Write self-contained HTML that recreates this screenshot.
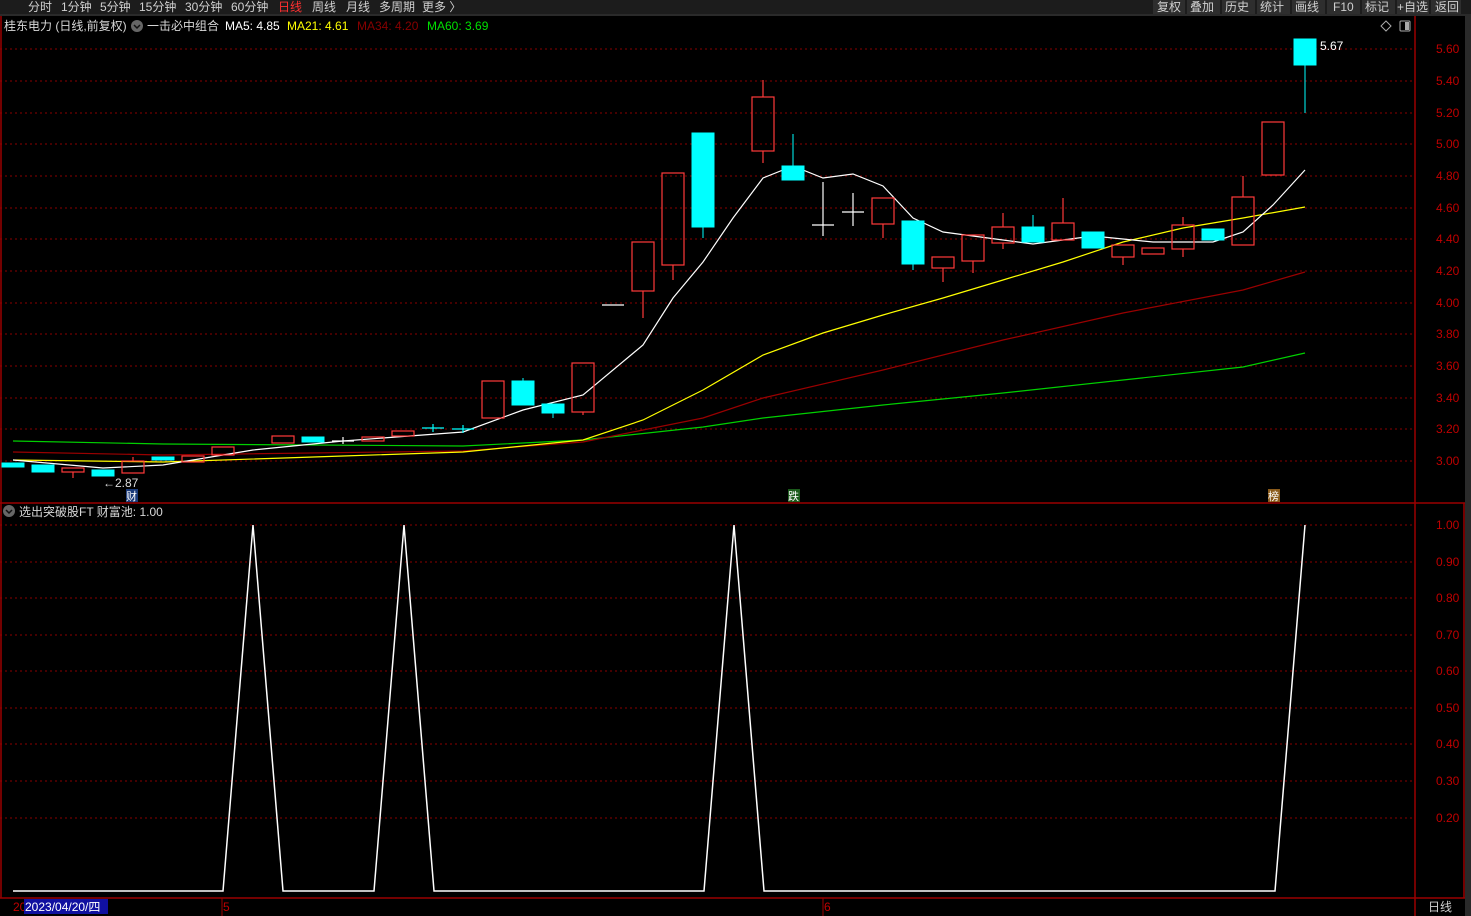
<!DOCTYPE html>
<html><head><meta charset="utf-8"><style>
body{margin:0;background:#000;width:1471px;height:916px;overflow:hidden;font-family:"Liberation Sans","Noto Sans CJK SC",sans-serif}
svg{position:absolute;left:0;top:0}
</style></head><body>
<svg width="1471" height="916" viewBox="0 0 1471 916" font-family="Liberation Sans, Noto Sans CJK SC, sans-serif">
<rect width="1471" height="916" fill="#000"/>
<rect x="0" y="0" width="1471" height="14" fill="#1c1c1c"/>
<rect x="0" y="14" width="1471" height="2" fill="#2a2a2a"/>
<g font-size="12" fill="#d0d0d0">
<text x="28" y="11">分时</text><text x="61" y="11">1分钟</text><text x="100" y="11">5分钟</text><text x="139" y="11">15分钟</text><text x="185" y="11">30分钟</text><text x="231" y="11">60分钟</text>
<text x="278" y="11" fill="#ff3030">日线</text><text x="312" y="11">周线</text><text x="346" y="11">月线</text><text x="379" y="11">多周期</text><text x="422" y="11">更多 〉</text>
</g>
<g fill="#2e2e2e"><rect x="1153" y="0" width="32" height="14"/><rect x="1187" y="0" width="33" height="14"/><rect x="1222" y="0" width="33" height="14"/><rect x="1257" y="0" width="33" height="14"/><rect x="1292" y="0" width="33" height="14"/><rect x="1327" y="0" width="33" height="14"/><rect x="1362" y="0" width="33" height="14"/><rect x="1397" y="0" width="32" height="14"/><rect x="1431" y="0" width="30" height="14"/></g>
<g font-size="12" fill="#d0d0d0"><text x="1157" y="11">复权</text><text x="1190" y="11">叠加</text><text x="1225" y="11">历史</text><text x="1260" y="11">统计</text><text x="1295" y="11">画线</text><text x="1333" y="11">F10</text><text x="1365" y="11">标记</text><text x="1397" y="11">+自选</text><text x="1435" y="11">返回</text></g>
<rect x="1465" y="16" width="6" height="900" fill="#2a2a2a"/>
<g font-size="12"><text x="4" y="30" fill="#d8d8d8">桂东电力 (日线,前复权)</text>
<circle cx="137" cy="26" r="6" fill="#666"/><path d="M134 25 l3 3 l3 -3" stroke="#111" stroke-width="1.5" fill="none"/>
<text x="147" y="30" fill="#d8d8d8">一击必中组合</text><text x="225" y="30" fill="#fff">MA5: 4.85</text><text x="287" y="30" fill="#ffff00">MA21: 4.61</text><text x="357" y="30" fill="#880000">MA34: 4.20</text><text x="427" y="30" fill="#00e000">MA60: 3.69</text></g>
<path d="M1386 21 l5 5 l-5 5 l-5 -5z" stroke="#aaa" fill="none"/><rect x="1400" y="21" width="10" height="10" rx="1" stroke="#aaa" fill="none"/><rect x="1405" y="22" width="4" height="8" fill="#aaa"/>
<g stroke="#8a0000" stroke-dasharray="2,3" stroke-width="1">
<line x1="0" y1="49" x2="1414" y2="49"/><line x1="0" y1="81" x2="1414" y2="81"/><line x1="0" y1="113" x2="1414" y2="113"/><line x1="0" y1="144" x2="1414" y2="144"/><line x1="0" y1="176" x2="1414" y2="176"/><line x1="0" y1="208" x2="1414" y2="208"/><line x1="0" y1="239" x2="1414" y2="239"/><line x1="0" y1="271" x2="1414" y2="271"/><line x1="0" y1="303" x2="1414" y2="303"/><line x1="0" y1="334" x2="1414" y2="334"/><line x1="0" y1="366" x2="1414" y2="366"/><line x1="0" y1="398" x2="1414" y2="398"/><line x1="0" y1="429" x2="1414" y2="429"/><line x1="0" y1="461" x2="1414" y2="461"/>
<line x1="0" y1="525" x2="1414" y2="525"/><line x1="0" y1="562" x2="1414" y2="562"/><line x1="0" y1="598" x2="1414" y2="598"/><line x1="0" y1="635" x2="1414" y2="635"/><line x1="0" y1="671" x2="1414" y2="671"/><line x1="0" y1="708" x2="1414" y2="708"/><line x1="0" y1="744" x2="1414" y2="744"/><line x1="0" y1="781" x2="1414" y2="781"/><line x1="0" y1="818" x2="1414" y2="818"/>
</g>
<g stroke="#9a0000" stroke-width="1.5" fill="none">
<line x1="1415" y1="16" x2="1415" y2="916"/><line x1="0" y1="503" x2="1465" y2="503"/><line x1="0" y1="898" x2="1465" y2="898"/><line x1="1464" y1="503" x2="1464" y2="898"/><line x1="1" y1="16" x2="1" y2="898"/>
</g>
<g fill="#c00000" font-size="12">
<text x="1436" y="53">5.60</text><text x="1436" y="85">5.40</text><text x="1436" y="117">5.20</text><text x="1436" y="148">5.00</text><text x="1436" y="180">4.80</text><text x="1436" y="212">4.60</text><text x="1436" y="243">4.40</text><text x="1436" y="275">4.20</text><text x="1436" y="307">4.00</text><text x="1436" y="338">3.80</text><text x="1436" y="370">3.60</text><text x="1436" y="402">3.40</text><text x="1436" y="433">3.20</text><text x="1436" y="465">3.00</text>
<text x="1436" y="529">1.00</text><text x="1436" y="566">0.90</text><text x="1436" y="602">0.80</text><text x="1436" y="639">0.70</text><text x="1436" y="675">0.60</text><text x="1436" y="712">0.50</text><text x="1436" y="748">0.40</text><text x="1436" y="785">0.30</text><text x="1436" y="822">0.20</text>
</g>
<g fill="none" stroke-width="1.2">
<polyline stroke="#00d000" points="13,441 163,444 463,446 583,440 703,427 763,418 883,405 1003,393 1123,380 1243,367 1305,353"/>
<polyline stroke="#990000" points="13,452 163,455 463,451 583,442 703,418 763,398 883,370 1003,340 1123,313 1243,290 1305,272"/>
<polyline stroke="#ffff00" points="13,460 163,462 343,456 463,452 583,440 643,420 703,390 763,355 823,333 883,315 943,298 1003,280 1063,262 1123,242 1183,228 1243,218 1305,207"/>
<polyline stroke="#ffffff" points="13,460 103,468 163,465 253,450 343,441 463,432 523,410 583,395 643,345 673,298 703,262 733,218 763,178 793,166 823,178 853,174 883,186 913,218 943,232 973,236 1033,244 1093,236 1153,242 1213,242 1243,232 1273,205 1305,170"/>
</g>
<g fill="#00ffff" stroke="#00ffff">
<rect x="2" y="463" width="22" height="4"/><rect x="32" y="465" width="22" height="7"/><rect x="92" y="470" width="22" height="6"/><rect x="152" y="457" width="22" height="3"/><rect x="302" y="437" width="22" height="5"/>
<rect x="512" y="381" width="22" height="24"/><rect x="542" y="404" width="22" height="9"/><rect x="692" y="133" width="22" height="94"/><rect x="782" y="166" width="22" height="14"/>
<rect x="902" y="221" width="22" height="43"/><rect x="1022" y="227" width="22" height="15"/><rect x="1082" y="232" width="22" height="16"/><rect x="1202" y="229" width="22" height="11"/><rect x="1294" y="39" width="22" height="26"/>
<line x1="703" y1="227" x2="703" y2="238"/><line x1="793" y1="134" x2="793" y2="166"/><line x1="913" y1="264" x2="913" y2="270"/><line x1="1033" y1="215" x2="1033" y2="227"/><line x1="1305" y1="65" x2="1305" y2="113"/><line x1="523" y1="378" x2="523" y2="381"/><line x1="553" y1="413" x2="553" y2="418"/>
</g>
<g fill="none" stroke="#ff3a3a" stroke-width="1.2">
<rect x="62" y="468" width="22" height="4"/><rect x="122" y="461" width="22" height="12"/><rect x="182" y="456" width="22" height="6"/><rect x="212" y="447" width="22" height="8"/><rect x="272" y="436" width="22" height="7"/><rect x="362" y="437" width="22" height="4"/><rect x="392" y="431" width="22" height="5"/>
<rect x="482" y="381" width="22" height="37"/>
<rect x="572" y="363" width="22" height="49"/><rect x="632" y="242" width="22" height="49"/><rect x="662" y="173" width="22" height="92"/><rect x="752" y="97" width="22" height="54"/>
<rect x="872" y="198" width="22" height="26"/><rect x="932" y="257" width="22" height="11"/><rect x="962" y="235" width="22" height="26"/><rect x="992" y="227" width="22" height="16"/><rect x="1052" y="223" width="22" height="17"/><rect x="1112" y="245" width="22" height="12"/><rect x="1142" y="248" width="22" height="6"/><rect x="1172" y="225" width="22" height="24"/><rect x="1232" y="197" width="22" height="48"/><rect x="1262" y="122" width="22" height="53"/>
<line x1="643" y1="291" x2="643" y2="318"/><line x1="673" y1="265" x2="673" y2="280"/><line x1="763" y1="80" x2="763" y2="97"/><line x1="763" y1="151" x2="763" y2="163"/><line x1="883" y1="224" x2="883" y2="238"/><line x1="943" y1="268" x2="943" y2="282"/><line x1="973" y1="261" x2="973" y2="273"/><line x1="1003" y1="213" x2="1003" y2="227"/><line x1="1003" y1="243" x2="1003" y2="249"/><line x1="1063" y1="198" x2="1063" y2="223"/><line x1="1123" y1="257" x2="1123" y2="265"/><line x1="1183" y1="217" x2="1183" y2="225"/><line x1="1183" y1="249" x2="1183" y2="257"/><line x1="1243" y1="176" x2="1243" y2="197"/><line x1="73" y1="472" x2="73" y2="478"/><line x1="133" y1="457" x2="133" y2="461"/><line x1="583" y1="412" x2="583" y2="415"/>
</g>
<g stroke="#fff" stroke-width="1.2">
<line x1="332" y1="441" x2="354" y2="441"/><line x1="343" y1="437" x2="343" y2="444"/><line x1="602" y1="305" x2="624" y2="305"/><line x1="812" y1="225" x2="834" y2="225"/><line x1="823" y1="182" x2="823" y2="236"/><line x1="842" y1="212" x2="864" y2="212"/><line x1="853" y1="193" x2="853" y2="226"/>
</g>
<g stroke="#00ffff" stroke-width="1.2"><line x1="422" y1="428" x2="444" y2="428"/><line x1="433" y1="424" x2="433" y2="432"/><line x1="452" y1="429" x2="474" y2="429"/><line x1="463" y1="425" x2="463" y2="433"/></g>
<text x="1320" y="50" font-size="12" fill="#fff">5.67</text>
<text x="103" y="487" font-size="12" fill="#ddd">←2.87</text>
<rect x="126" y="489" width="12" height="13" fill="#1a3a7a"/><text x="126" y="500" font-size="11" fill="#fff">财</text>
<rect x="788" y="489" width="12" height="13" fill="#1a5a1a"/><text x="788" y="500" font-size="11" fill="#fff">跌</text>
<rect x="1268" y="489" width="12" height="13" fill="#8a5a1a"/><text x="1268" y="500" font-size="11" fill="#fff">榜</text>
<circle cx="9" cy="511" r="6" fill="#666"/><path d="M6 510 l3 3 l3 -3" stroke="#111" stroke-width="1.5" fill="none"/>
<text x="19" y="516" font-size="12" fill="#d8d8d8">选出突破股FT 财富池: 1.00</text>
<polyline fill="none" stroke="#fff" stroke-width="1.5" points="13,891 223,891 253,525 283,891 374,891 404,525 434,891 704,891 734,525 764,891 1275,891 1305,525"/>
<text x="13" y="911" font-size="12" fill="#c00000">20</text>
<rect x="24" y="899" width="84" height="15" fill="#1010a0"/><text x="25" y="911" font-size="12" fill="#fff">2023/04/20/四</text>
<line x1="222" y1="898" x2="222" y2="916" stroke="#9a0000"/><text x="223" y="911" font-size="12" fill="#c00000">5</text>
<line x1="823" y1="898" x2="823" y2="916" stroke="#9a0000"/><text x="824" y="911" font-size="12" fill="#c00000">6</text>
<text x="1428" y="911" font-size="12" fill="#d0d0d0">日线</text>
</svg>
</body></html>
